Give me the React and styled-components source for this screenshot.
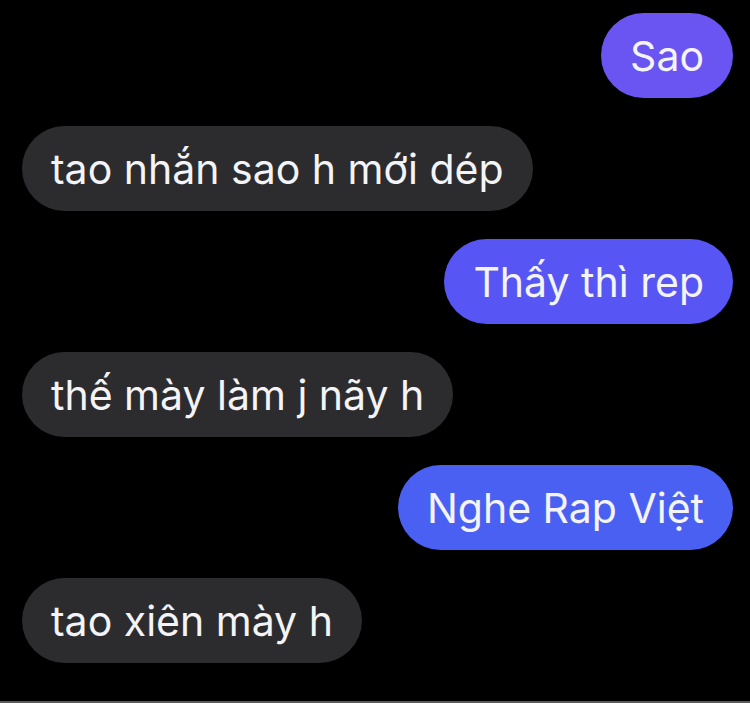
import React from 'react';
import styled, { createGlobalStyle } from 'styled-components';

const GlobalStyle = createGlobalStyle`
  html, body {
    margin: 0;
    padding: 0;
    background: #000;
  }
  body {
    font-family: Inter, "Noto Sans", sans-serif;
  }
`;

const messages = [
  { id: 1, mine: true, text: 'Sao', tone: '#6b55f2' },
  { id: 2, mine: false, text: 'tao nhắn sao h mới dép' },
  { id: 3, mine: true, text: 'Thấy thì rep', tone: '#5756f4' },
  { id: 4, mine: false, text: 'thế mày làm j nãy h' },
  { id: 5, mine: true, text: 'Nghe Rap Việt', tone: '#4a60f3' },
  { id: 6, mine: false, text: 'tao xiên mày h' },
];

const App = () => {
  return (
    <>
      <GlobalStyle />
      <Screen>
        <Thread>
          {messages.map((m) => (
            <Row key={m.id} $mine={m.mine}>
              <Bubble $mine={m.mine} $tone={m.tone}>
                {m.text}
              </Bubble>
            </Row>
          ))}
        </Thread>
        <BottomEdge />
      </Screen>
    </>
  );
};

export default App;

const Screen = styled.div`
  width: 750px;
  height: 703px;
  background: #000;
  display: flex;
  flex-direction: column;
  justify-content: space-between;
  overflow: hidden;
`;

const Thread = styled.div`
  display: flex;
  flex-direction: column;
  gap: 28px;
  padding: 13px 17px 0 22px;
`;

const Row = styled.div`
  display: flex;
  justify-content: ${(p) => (p.$mine ? 'flex-end' : 'flex-start')};
`;

const Bubble = styled.div`
  height: 85px;
  box-sizing: border-box;
  padding: 0 29px;
  border-radius: 43px;
  display: flex;
  align-items: center;
  background: ${(p) => (p.$mine ? p.$tone : '#2c2c2e')};
  color: #f4f4f6;
  font-size: 41px;
  white-space: nowrap;
`;

const BottomEdge = styled.div`
  height: 2px;
  background: #5a5a5a;
`;
